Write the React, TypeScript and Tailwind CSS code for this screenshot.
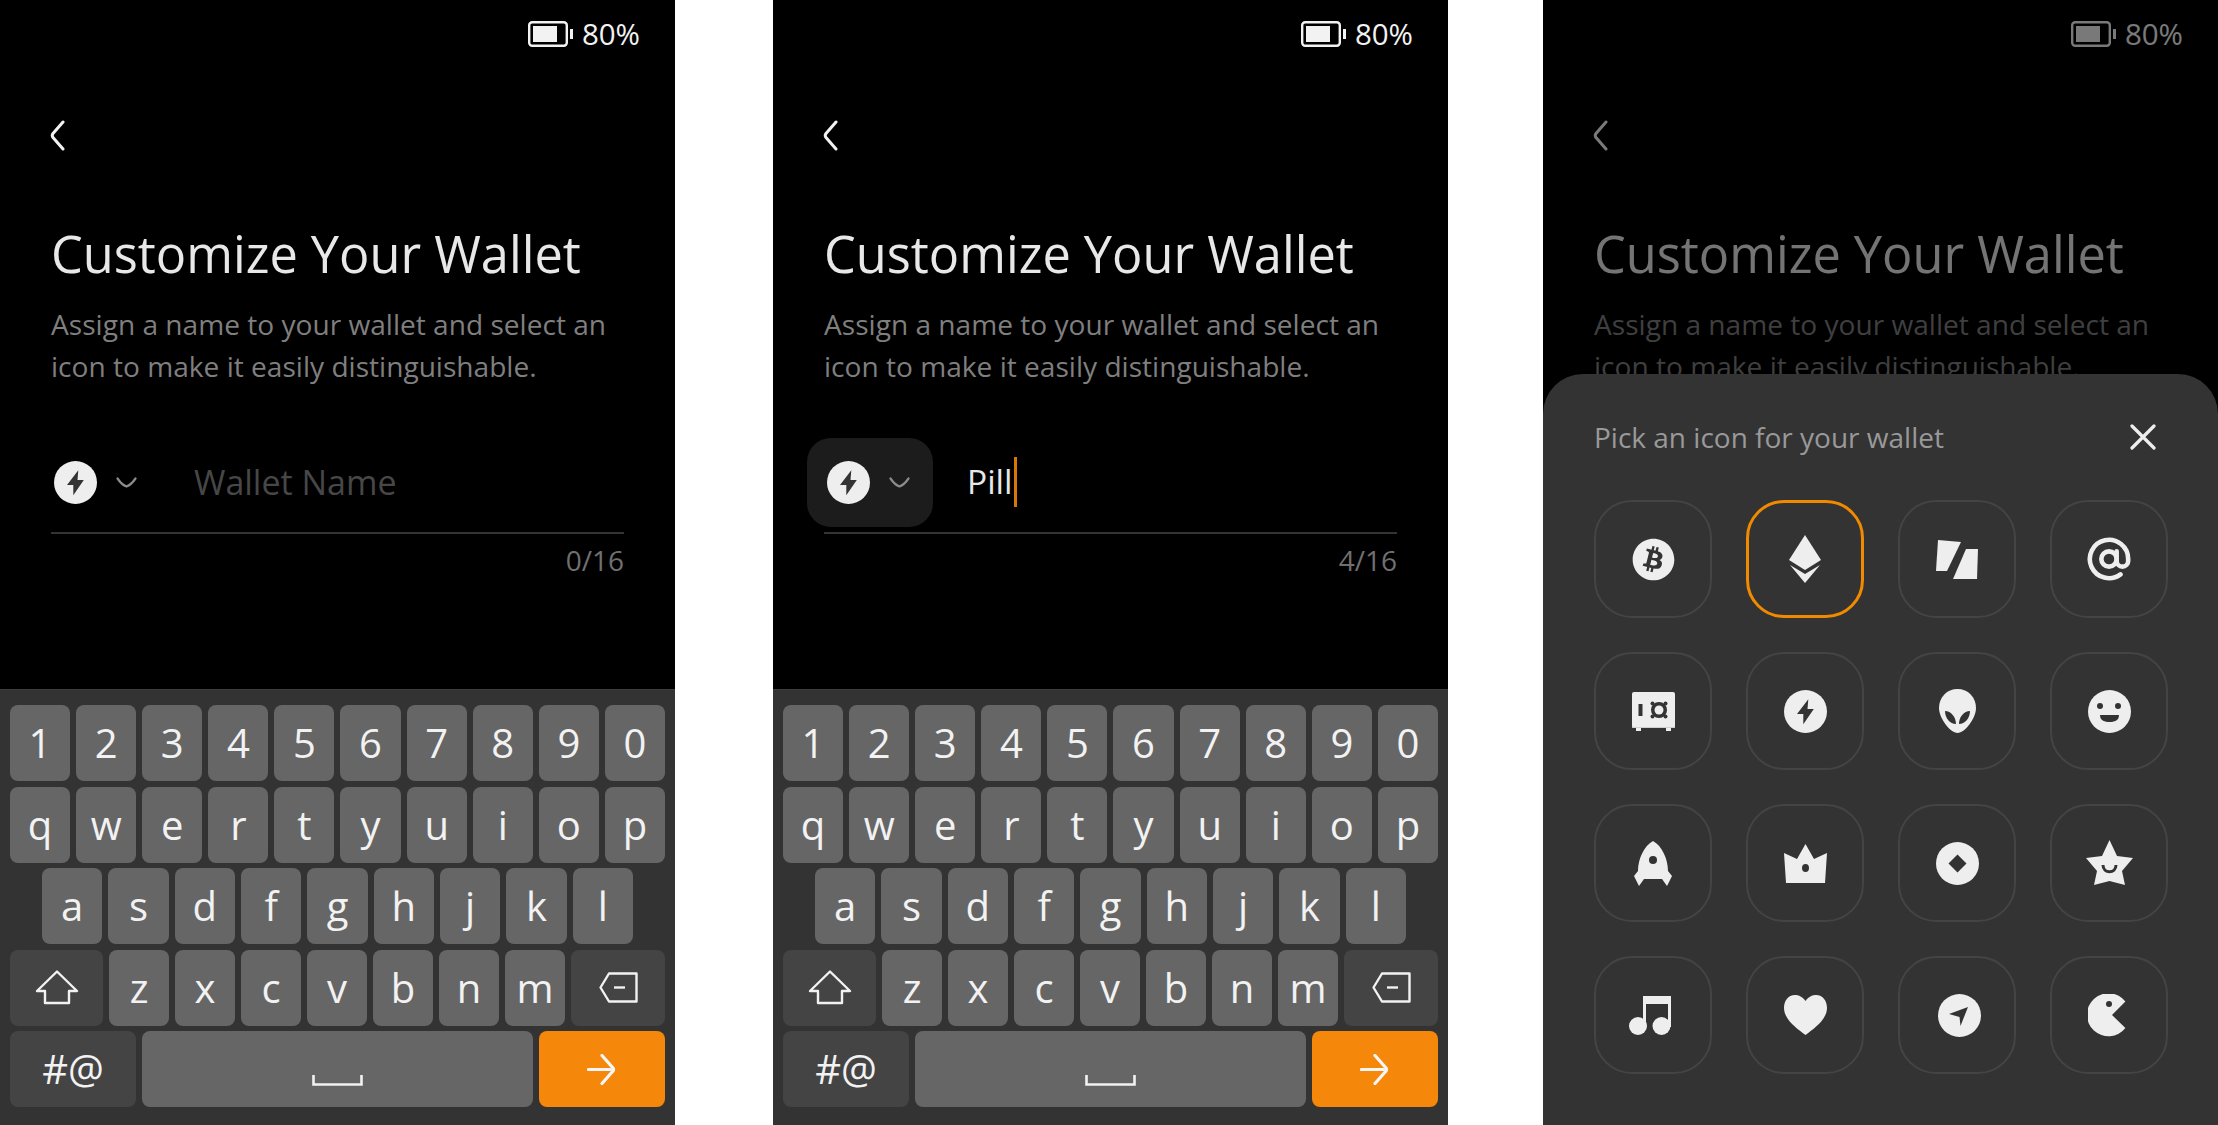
import type { ReactNode } from "react";
import { AtSign } from "lucide-react";
import { FaBitcoin } from "react-icons/fa";

const DARK = "#333333";

function Battery() {
  return (
    <svg width="45" height="26" viewBox="0 0 45 26" className="block">
      <rect x="1.2" y="1.2" width="37.6" height="23.6" rx="3" fill="none" stroke="#f2f2f2" strokeWidth="2.4" />
      <rect x="5" y="5" width="24" height="16" fill="#f2f2f2" />
      <rect x="42" y="8" width="3" height="10" fill="#f2f2f2" />
    </svg>
  );
}

function BackArrow() {
  return (
    <svg width="16" height="31" viewBox="0 0 16 31" className="block" fill="none" stroke="#f2f2f2" strokeWidth="3" strokeLinecap="round" strokeLinejoin="round">
      <path d="M13 2 L3 13.500 Q1.500 15.500 3 17.500 L13 29" />
    </svg>
  );
}

function BoltCircle() {
  return (
    <svg width="43" height="43" viewBox="0 0 43 43" className="block">
      <circle cx="21.5" cy="21.5" r="21.5" fill="#eeeeee" />
      <path d="M24.3 9.3 13 24h6.3v10.3L29.8 19h-6.3z" fill={DARK} />
    </svg>
  );
}

function Chevron() {
  return (
    <svg width="21" height="11" viewBox="0 0 21 11" fill="none" stroke="#8c8c8c" strokeWidth="2.2" strokeLinecap="round" className="block">
      <path d="M1.5 1.5 Q6 8 10.5 9.5 Q15 8 19.5 1.5" />
    </svg>
  );
}

function WalletForm({ name, count, active }: { name?: string; count: number; active?: boolean }) {
  return (
    <div>
      <div className="flex items-center justify-end gap-[9px] pt-[21px] pr-[35px] h-[47px]">
        <Battery />
        <span className="text-[29.5px] leading-none text-[#f2f2f2]">80%</span>
      </div>
      <div className="pl-[50px] pt-[73px]">
        <BackArrow />
      </div>
      <div className="px-[51px]">
        <h1 className="mt-[69px] text-[50.5px] leading-[68px] text-[#e8e8e8] whitespace-nowrap">
          Customize Your Wallet
        </h1>
        <p className="mt-[15px] text-[28.1px] leading-[42px] text-[#7f7f7f] whitespace-nowrap">
          Assign a name to your wallet and select an
          <br />
          icon to make it easily distinguishable.
        </p>
        <div className="mt-[51px] flex items-center h-[96px] border-b-2 border-[#333333] pb-[6px]">
          <div className={"flex items-center shrink-0 -ml-[17px] w-[126px] h-[89px] rounded-[24px] pl-[20px] gap-[19px] " + (active ? "bg-[#1c1c1c]" : "")}>
            <BoltCircle />
            <Chevron />
          </div>
          {name ? (
            <div className="flex items-center ml-[34px]">
              <span className="text-[33.5px] leading-none text-[#e8e8e8]">{name}</span>
              <span className="ml-[1px] w-[3px] h-[50px] bg-[#d9760a]" />
            </div>
          ) : (
            <span className="ml-[34px] text-[34px] leading-none text-[#474747]">Wallet Name</span>
          )}
        </div>
        <div className="mt-[7px] text-right text-[28px] leading-[38px] text-[#707070]">{count}/16</div>
      </div>
    </div>
  );
}

function Key({ children, dark, className = "" }: { children?: ReactNode; dark?: boolean; className?: string }) {
  return (
    <div className={"flex items-center justify-center h-[76px] rounded-[8px] text-[40px] leading-none text-[#f2f2f2] " + (dark ? "bg-[#444444] " : "bg-[#666666] ") + className}>
      {children}
    </div>
  );
}

function Keyboard() {
  return (
    <div className="mt-auto h-[436px] bg-[#333333] border-t border-[#3c3c3c] pt-[15px] px-[10px] flex flex-col gap-[5.5px]">
      <div className="grid grid-cols-10 gap-[6px]">
        {"1234567890".split("").map((k) => <Key key={k}>{k}</Key>)}
      </div>
      <div className="grid grid-cols-10 gap-[6px]">
        {"qwertyuiop".split("").map((k) => <Key key={k}>{k}</Key>)}
      </div>
      <div className="grid grid-cols-9 gap-[6px] px-[32px]">
        {"asdfghjkl".split("").map((k) => <Key key={k}>{k}</Key>)}
      </div>
      <div className="flex gap-[6px]">
        <Key dark className="w-[93px] shrink-0">
          <svg width="44" height="35" viewBox="0 0 44 35" fill="none" stroke="#f2f2f2" strokeWidth="2.4" strokeLinejoin="round">
            <path d="M22 1.5 42 21h-8v12H10V21H2z" />
          </svg>
        </Key>
        {"zxcvbnm".split("").map((k) => <Key key={k} className="flex-1">{k}</Key>)}
        <Key dark className="w-[94px] shrink-0">
          <svg width="39" height="31" viewBox="0 0 39 31" fill="none" stroke="#f2f2f2" strokeWidth="2.4" strokeLinejoin="round">
            <path d="M1.5 15.5 10 1.5h27.5v28H10z" />
            <path d="M15 15.5h11" />
          </svg>
        </Key>
      </div>
      <div className="flex gap-[6px]">
        <Key dark className="w-[126px] shrink-0 text-[37px]">#@</Key>
        <Key className="flex-1">
          <svg width="51" height="11" viewBox="0 0 51 11" fill="none" stroke="#f2f2f2" strokeWidth="2.6" className="mt-[22px]">
            <path d="M1.5 0v9.5h48V0" />
          </svg>
        </Key>
        <div className="flex items-center justify-center h-[76px] w-[126px] shrink-0 rounded-[8px] bg-[#f5870a]">
          <svg width="30" height="31" viewBox="0 0 30 31" fill="none" stroke="#f6f6f6" strokeWidth="3.2" strokeLinecap="round" strokeLinejoin="round">
            <path d="M1.5 15.5h22" />
            <path d="M15 1.5 26 14q1 1.500 0 3L15 29.500" />
          </svg>
        </div>
      </div>
    </div>
  );
}

const icons: ReactNode[] = [
  <FaBitcoin size={43} color="#eeeeee" />,
  <svg width="32" height="48" viewBox="0 0 32 48" fill="#eeeeee">
    <path d="M16 0 32 25 16 35 0 25z" />
    <path d="M1 30 16 39 31 30 16 48z" />
  </svg>,
  <svg width="42" height="39" viewBox="0 0 42 39" fill="#eeeeee">
    <path d="M2 0 25 2 11 31H0z" />
    <path d="M30 9h12l-1 30H17z" />
  </svg>,
  <AtSign size={46} strokeWidth={2.4} color="#eeeeee" />,
  <svg width="43" height="39" viewBox="0 0 43 39">
    <rect x="0" y="0" width="43" height="36" rx="2" fill="#eeeeee" />
    <rect x="4" y="35" width="5" height="4" fill="#eeeeee" />
    <rect x="34" y="35" width="5" height="4" fill="#eeeeee" />
    <rect x="0" y="35" width="43" height="1" fill="#cfcfcf" />
    <rect x="6.5" y="12" width="4" height="12" fill={DARK} />
    <circle cx="27" cy="18" r="8" fill={DARK} />
    <circle cx="27" cy="18" r="4.5" fill="#eeeeee" />
    <circle cx="20.5" cy="11.5" r="2" fill={DARK} />
    <circle cx="33.5" cy="11.5" r="2" fill={DARK} />
    <circle cx="20.5" cy="24.5" r="2" fill={DARK} />
    <circle cx="33.5" cy="24.5" r="2" fill={DARK} />
  </svg>,
  <BoltCircle />,
  <svg width="37" height="44" viewBox="0 0 37 44">
    <path d="M18.5 0C29 0 37 8 37 19 37 29 26 44 18.5 44 11 44 0 29 0 19 0 8 8 0 18.5 0z" fill="#eeeeee" />
    <path d="M6 22c6 0 11 6 11 13-6 0-11-6-11-13zM31 22c-6 0-11 6-11 13 6 0 11-6 11-13z" fill={DARK} />
  </svg>,
  <svg width="43" height="43" viewBox="0 0 43 43">
    <circle cx="21.5" cy="21.5" r="21.5" fill="#eeeeee" />
    <circle cx="12" cy="16" r="3" fill={DARK} />
    <circle cx="30" cy="16" r="3" fill={DARK} />
    <path d="M12 25h19c0 6-5 7-9.500 7S12 31 12 25z" fill={DARK} />
  </svg>,
  <svg width="38" height="45" viewBox="0 0 38 45">
    <path d="M19 0c9 5 15 18 15 30l4 5-5 10-5-7H10l-5 7-5-10 4-5C4 18 10 5 19 0z" fill="#eeeeee" />
    <circle cx="19" cy="19" r="4" fill={DARK} />
  </svg>,
  <svg width="43" height="39" viewBox="0 0 43 39">
    <path d="M21.500 0 30 15 43 9l-2 30H2L0 9l13 6z" fill="#eeeeee" />
    <ellipse cx="21.5" cy="24" rx="3.500" ry="4" fill={DARK} />
  </svg>,
  <svg width="43" height="43" viewBox="0 0 43 43">
    <circle cx="21.5" cy="21.5" r="21.5" fill="#eeeeee" />
    <path d="M21.500 12.500 30.500 21.500 21.500 30.500 12.500 21.500z" fill={DARK} />
  </svg>,
  <svg width="47" height="46" viewBox="0 0 47 46">
    <path d="M23.500 0 31 16l16 2-11 13 3 14-15.500-4L8 45l3-14L0 18l16-2z" fill="#eeeeee" />
    <path d="M17 25c0 9 13 9 13 0" fill="none" stroke={DARK} strokeWidth="3" />
  </svg>,
  <svg width="42" height="39" viewBox="0 0 42 39" fill="#eeeeee" className="-translate-x-[3px]">
    <path d="M14 0h28v31h-3V8H17v23h-3z" />
    <circle cx="9" cy="30" r="9" />
    <circle cx="32.5" cy="30" r="9" />
  </svg>,
  <svg width="43" height="40" viewBox="0 0 43 40" fill="#eeeeee">
    <path d="M21.500 6C18 1 14 0 11 0 4 0 0 6 0 13c0 11 12 20 21.500 27C31 33 43 24 43 13 43 6 39 0 32 0 29 0 25 1 21.500 6z" />
  </svg>,
  <svg width="43" height="43" viewBox="0 0 43 43" className="translate-x-[2px]">
    <circle cx="21.5" cy="21.5" r="21.5" fill="#eeeeee" />
    <path d="M30 13 11 20l10.500 3 1 9z" fill={DARK} />
  </svg>,
  <svg width="43" height="43" viewBox="0 0 43 43">
    <path d="M37.400 7.500A21.500 21.500 0 1 0 37.400 34L24 21z" fill="#eeeeee" />
    <circle cx="21" cy="10" r="3" fill={DARK} />
  </svg>,
];

function IconSheet() {
  return (
    <div className="absolute inset-x-0 bottom-0 top-[374px] rounded-t-[40px] bg-[#333333] pl-[51px] pr-[50px]">
      <div className="flex items-center justify-between h-[126px] pr-[12px]">
        <span className="text-[28px] leading-none text-[#999999]">Pick an icon for your wallet</span>
        <svg width="26" height="26" viewBox="0 0 26 26" fill="none" stroke="#eeeeee" strokeWidth="3.2" strokeLinecap="round">
          <path d="M2 2 24 24M24 2 2 24" />
        </svg>
      </div>
      <div className="grid grid-cols-4 gap-[34px] w-[574px]">
        {icons.map((icon, i) => (
          <div
            key={i}
            className={"flex items-center justify-center w-[118px] h-[118px] rounded-[38px] " + (i === 1 ? "border-[3px] border-[#f08a00]" : "border-2 border-[#444444]")}
          >
            {icon}
          </div>
        ))}
      </div>
    </div>
  );
}

function Phone({ children }: { children: ReactNode }) {
  return <div className="relative flex flex-col w-[675px] h-[1125px] shrink-0 overflow-hidden bg-black">{children}</div>;
}

export default function App() {
  return (
    <div className="flex w-[2218px] h-[1125px] bg-white overflow-hidden font-['Open_Sans',sans-serif]">
      <Phone>
        <WalletForm count={0} />
        <Keyboard />
      </Phone>
      <div className="w-[98px] shrink-0" />
      <Phone>
        <WalletForm name="Pill" count={4} active />
        <Keyboard />
      </Phone>
      <div className="w-[95px] shrink-0" />
      <Phone>
        <div className="opacity-50">
          <WalletForm count={0} />
        </div>
        <IconSheet />
      </Phone>
    </div>
  );
}
